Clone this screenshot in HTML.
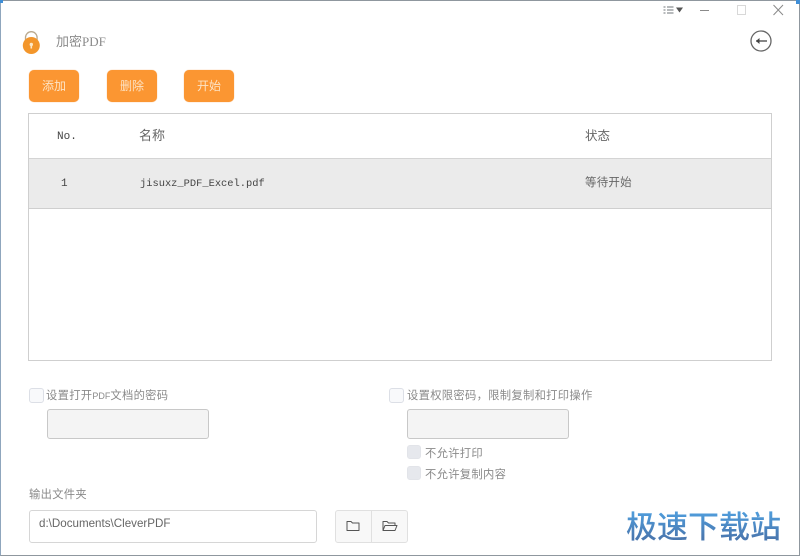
<!DOCTYPE html>
<html>
<head>
<meta charset="utf-8">
<style>
html,body{margin:0;padding:0;background:#fff}
body{width:800px;height:556px;position:relative;overflow:hidden;font-family:"Liberation Sans","Noto Sans CJK SC",sans-serif;color:#777}
.a{position:absolute;white-space:nowrap}
.frame{left:0;top:0;width:798px;height:554px;border:1px solid #8f979e;border-left-color:#8fa6bd}
.btn{width:50px;height:32px;top:70px;background:#fb9632;border-radius:5px;color:#fde3c4;font-size:12px;line-height:32px;text-align:center;box-shadow:0 0 1px #f5b070}
.tbl{left:28px;top:113px;width:742px;height:246px;border:1px solid #cfcfcf}
.row{left:29px;top:158px;width:742px;background:#ebebeb;border-top:1px solid #d4d4d4;border-bottom:1px solid #cfcfcf;box-sizing:border-box;height:51px}
.mono{font-family:"Liberation Mono","Noto Sans CJK SC",monospace;font-size:10.400px;color:#444}
.cb{width:13px;height:13px;border:1px solid #dcdfe6;border-radius:3px;background:#f8f9fb}
.cbd{width:12px;height:12px;border-radius:3px;background:#e6e8ed;border:1px solid #e2e4e9}
.inp{width:160px;height:28px;background:#f4f4f4;border:1px solid #c8c8c8;border-radius:3px}
.lbl{font-size:11.300px;color:#8a8a8a;letter-spacing:.3px}
</style>
</head>
<body>
<div class="a frame"></div>
<div class="a" style="left:0;top:0;width:3px;height:3px;background:#3f8fd8"></div>
<div class="a" style="left:796px;top:0;width:4px;height:4px;background:#3f8fd8"></div>

<!-- window controls -->
<svg class="a" style="left:660px;top:2px" width="130" height="16" viewBox="0 0 130 16" fill="none">
  <path d="M3.500 5h2M3.500 8h2M3.500 11h2M7 5h6.500M7 8h6.500M7 11h6.500" stroke="#6f7478" stroke-width="1"/>
  <path d="M16 5.500h7l-3.500 5z" fill="#555"/>
  <path d="M40 8.500h9" stroke="#8a8a8a" stroke-width="1"/>
  <rect x="77.500" y="3.500" width="8" height="9" stroke="#d8d8d8" fill="none"/>
  <path d="M113.500 3l9.500 10M123 3l-9.500 10" stroke="#8a8a8a" stroke-width="1"/>
</svg>

<!-- lock icon -->
<svg class="a" style="left:20px;top:28px" width="24" height="28" viewBox="0 0 24 28" fill="none">
  <path d="M5.500 14V9.500a5.800 5.800 0 0 1 11.600 0V14" stroke="#b9a98f" stroke-width="1.300"/>
  <circle cx="11.300" cy="17.500" r="8.500" fill="#f3962b"/>
  <circle cx="11.300" cy="16.500" r="1.700" fill="#fde8c8"/>
  <rect x="10.500" y="17" width="1.600" height="3.500" fill="#fde8c8"/>
</svg>
<div class="a" style="left:56px;top:33px;font-size:13px;line-height:18px;color:#8b8b8b;font-family:'Liberation Serif','Noto Sans CJK SC',serif">加密PDF</div>

<!-- back icon -->
<svg class="a" style="left:748px;top:28px" width="26" height="26" viewBox="0 0 26 26" fill="none">
  <circle cx="13" cy="13" r="10" stroke="#666" stroke-width="1.300"/>
  <path d="M19 13H8" stroke="#444" stroke-width="1.300"/>
  <path d="M11.500 10l-3.500 3 3.500 3z" fill="#444"/>
</svg>

<div class="a btn" style="left:29px">添加</div>
<div class="a btn" style="left:107px">删除</div>
<div class="a btn" style="left:184px">开始</div>

<!-- table -->
<div class="a tbl"></div>
<div class="a row"></div>
<div class="a mono" style="left:57px;top:131px;font-size:11px">No.</div>
<div class="a" style="left:139px;top:127px;font-size:13px;line-height:18px;color:#666">名称</div>
<div class="a" style="left:585px;top:127px;font-size:12.500px;line-height:18px;color:#666">状态</div>
<div class="a mono" style="left:61px;top:178px;font-size:11px">1</div>
<div class="a mono" style="left:140px;top:178px">jisuxz_PDF_Excel.pdf</div>
<div class="a" style="left:585px;top:175px;font-size:11.500px;line-height:16px;color:#666;letter-spacing:.2px">等待开始</div>

<!-- left password -->
<div class="a cb" style="left:29px;top:388px"></div>
<div class="a lbl" style="left:46px;top:388px;line-height:16px">设置打开<span style="font-size:9px;letter-spacing:0">PDF</span>文档的密码</div>
<div class="a inp" style="left:47px;top:409px"></div>

<!-- right password -->
<div class="a cb" style="left:389px;top:388px"></div>
<div class="a lbl" style="left:407px;top:388px;line-height:16px">设置权限密码，限制复制和打印操作</div>
<div class="a inp" style="left:407px;top:409px"></div>
<div class="a cbd" style="left:407px;top:445px"></div>
<div class="a lbl" style="left:425px;top:446px;line-height:16px">不允许打印</div>
<div class="a cbd" style="left:407px;top:466px"></div>
<div class="a lbl" style="left:425px;top:467px;line-height:16px">不允许复制内容</div>

<!-- output -->
<div class="a lbl" style="left:29px;top:487px;line-height:16px">输出文件夹</div>
<div class="a" style="left:29px;top:510px;width:286px;height:31px;border:1px solid #d6d6d6;border-radius:3px;box-sizing:content-box;font-size:11.600px;line-height:25px;color:#666;text-indent:9px">d:\Documents\CleverPDF</div>
<div class="a" style="left:335px;top:510px;width:71px;height:31px;border:1px solid #e0e0e0;border-radius:3px;background:#f8f8f8"></div>
<div class="a" style="left:371px;top:511px;width:1px;height:31px;background:#e0e0e0"></div>
<svg class="a" style="left:345px;top:519px" width="56" height="14" viewBox="0 0 56 14" fill="none">
  <path d="M2 2.500h4l1.500 1.500H14v7.500H2z" stroke="#555" stroke-width="1" stroke-linejoin="round"/>
  <path d="M38 11.500v-9h4l1.500 1.500H50v2M38 11.500l2-5h12l-2 5z" stroke="#555" stroke-width="1" stroke-linejoin="round"/>
</svg>

<!-- watermark -->
<div class="a" style="left:626px;top:507px;font-size:31px;line-height:36px;font-weight:500;color:transparent;background:linear-gradient(#4f9ad8 20%,#4a78b0 85%);-webkit-background-clip:text;background-clip:text;font-family:'Noto Sans CJK SC',sans-serif">极速下载站</div>
</body>
</html>
